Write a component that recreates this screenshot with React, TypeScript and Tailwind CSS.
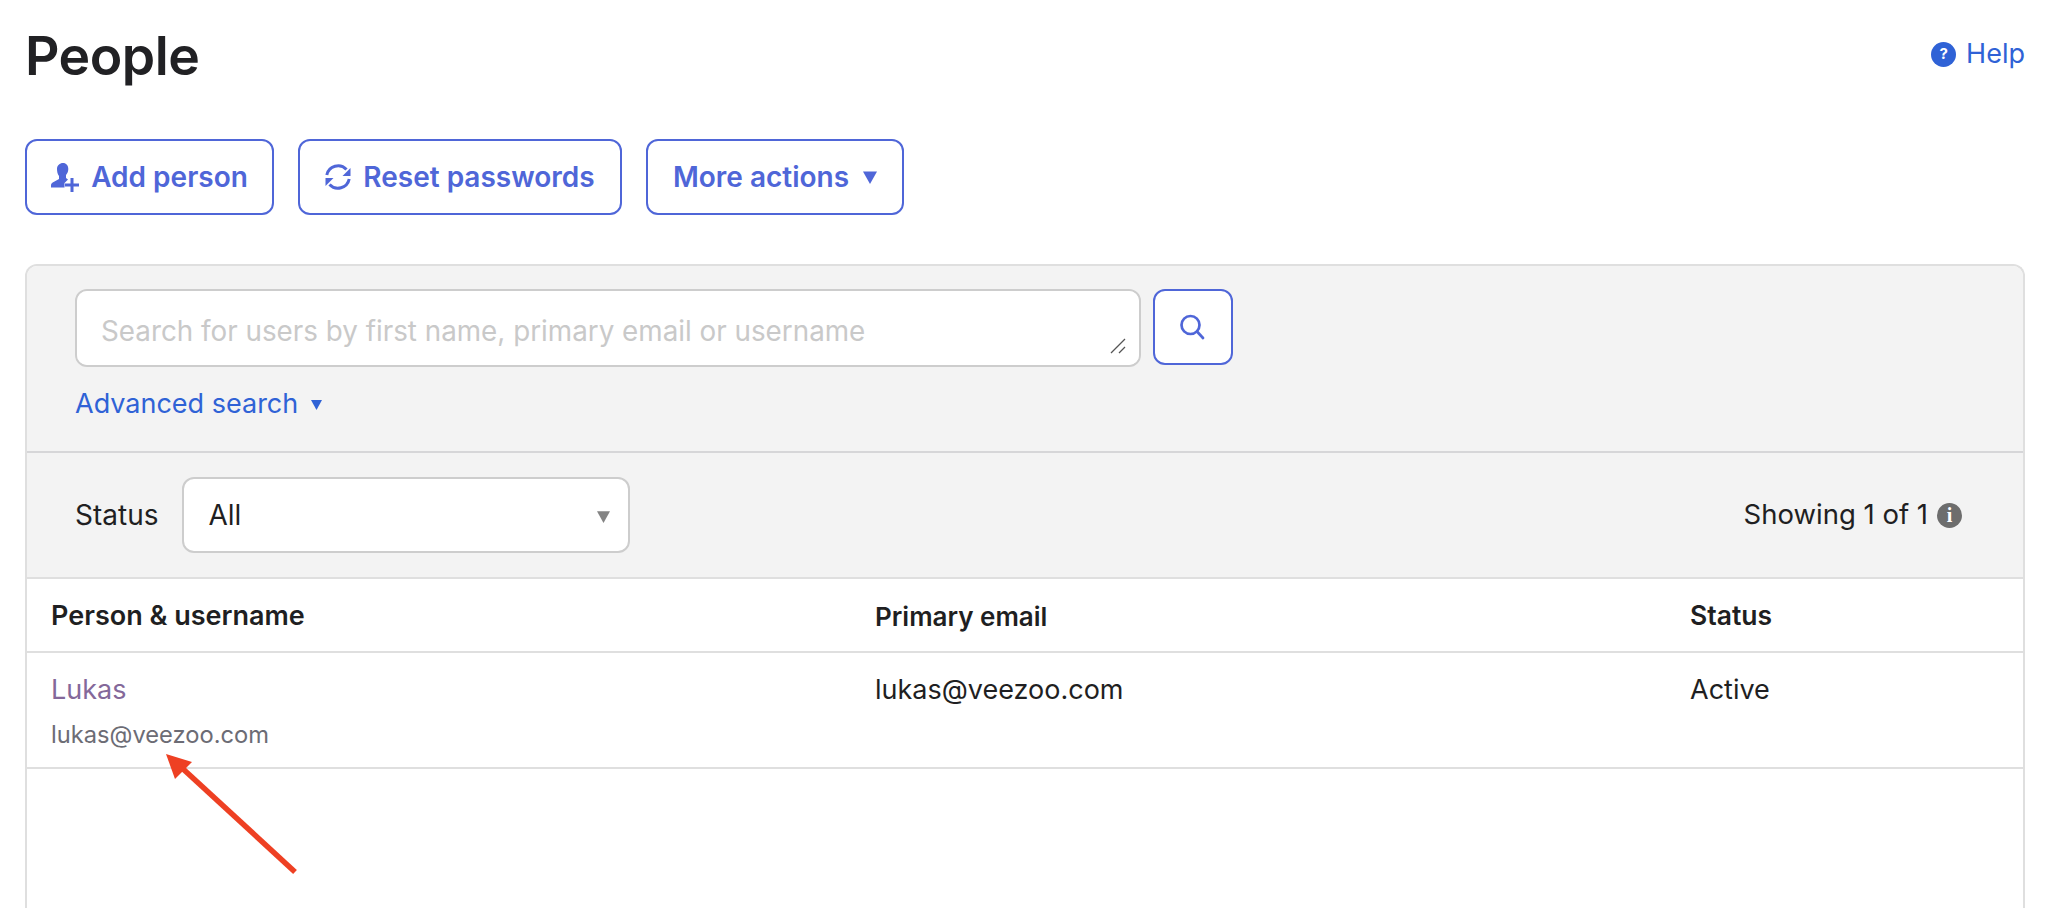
import { useState } from "react";
import type { ReactNode } from "react";

function AddPersonIcon() {
    return (
        <svg width="28" height="29" viewBox="0 0 28 29" fill="currentColor" aria-hidden="true">
            <path d="M12 0c3.200 0 5.300 2.500 5.300 6 0 2.500-1 4.700-2.300 6v3l2 1.500-3.500 3.500v4.500H0v-2.500c0-1.500 1.500-2.500 3.500-3.500l4.500-2.500v-3C6.500 11 6 8.500 6 6c0-3.500 2.800-6 6-6z" />
            <rect x="14" y="20.500" width="14" height="3" />
            <rect x="19.500" y="15" width="3" height="14" />
        </svg>
    );
}

function RefreshIcon() {
    return (
        <svg width="26" height="26" viewBox="0 0 26 26" fill="none" stroke="currentColor" strokeWidth="3" aria-hidden="true">
            <path d="M1.800 11A11.500 11.500 0 0 1 21.500 5.500" />
            <path d="M24.200 15A11.500 11.500 0 0 1 4.500 20.500" />
            <path d="M25.500 4v8h-8z" fill="currentColor" stroke="none" />
            <path d="M.5 22v-8h8z" fill="currentColor" stroke="none" />
        </svg>
    );
}

function SearchIcon() {
    return (
        <svg width="26" height="26" viewBox="0 0 26 26" fill="none" stroke="currentColor" strokeWidth="2.700" aria-hidden="true">
            <circle cx="10.500" cy="11" r="9" />
            <path d="M17 17.500l6 6.500" strokeLinecap="round" />
        </svg>
    );
}

function Caret({ className }: { className: string }) {
    return (
        <svg className={className} viewBox="0 0 10 10" fill="currentColor" aria-hidden="true">
            <path d="M0 1h10L5 10z" />
        </svg>
    );
}

function ActionButton({ className, children }: { className: string; children: ReactNode }) {
    return (
        <button className={`flex h-[76px] items-center justify-center rounded-xl border-2 border-[#4f66d8] bg-white text-[28px] font-semibold text-[#4f66d8] ${className}`}>
            {children}
        </button>
    );
}

export default function App() {
    const [query, setQuery] = useState("");

    return (
        <div className="relative h-[908px] overflow-hidden bg-white px-[25px] font-['Inter',sans-serif] text-[#1f1f22]">
            <header className="flex h-[139px] items-start justify-between">
                <h1 className="mt-[24px] text-[53.500px] leading-[64px] font-semibold tracking-[-0.5px] text-[#212124]">People</h1>
                <a href="#" className="mt-[36px] flex items-center gap-[10px] text-[27px] leading-[36px] text-[#2f62d6]">
                    <span className="flex size-[25px] items-center justify-center rounded-full bg-[#2f62d6] text-[15px] font-bold text-white">?</span>
                    Help
                </a>
            </header>

            <div className="flex gap-[24px]">
                <ActionButton className="w-[249px] gap-[12px]">
                    <AddPersonIcon />
                    Add person
                </ActionButton>
                <ActionButton className="w-[324px] gap-[12px]">
                    <RefreshIcon />
                    Reset passwords
                </ActionButton>
                <ActionButton className="w-[258px] gap-[14px]">
                    More actions
                    <Caret className="size-[14px]" />
                </ActionButton>
            </div>

            <section className="mt-[49px] min-h-[700px] rounded-t-xl border-2 border-b-0 border-[#dfdfdf]">
                <div className="h-[187px] rounded-t-[10px] border-b-2 border-[#d6d6d8] bg-[#f3f3f3] pt-[23px] pl-[48px]">
                    <div className="flex gap-[12px]">
                        <div className="relative">
                            <textarea
                                value={query}
                                onChange={(e) => setQuery(e.target.value)}
                                placeholder="Search for users by first name, primary email or username"
                                className="block h-[78px] w-[1066px] resize-none rounded-xl border-2 border-[#cdcdcd] bg-white px-[24px] pt-[22px] pb-[18px] text-[27.800px] leading-[36px] outline-none placeholder:text-[#c9c9c9]"
                            />
                            <svg className="absolute right-[15px] bottom-[13px]" width="16" height="16" viewBox="0 0 16 16" stroke="#555" strokeWidth="1.300" aria-hidden="true">
                                <path d="M1 15L15 1M9 15l6-6" />
                            </svg>
                        </div>
                        <button className="flex h-[76px] w-[80px] items-center justify-center rounded-xl border-2 border-[#4f66d8] bg-white text-[#4f66d8]">
                            <SearchIcon />
                        </button>
                    </div>
                    <a href="#" className="mt-[19px] flex items-center gap-[13px] text-[27px] leading-[36px] text-[#2f62d6]">
                        Advanced search
                        <Caret className="size-[11px]" />
                    </a>
                </div>

                <div className="flex h-[126px] items-center justify-between border-b-2 border-[#dfdfdf] bg-[#f3f3f3] pr-[61px] pl-[48px]">
                    <div className="flex items-center gap-[24px]">
                        <span className="text-[28px]">Status</span>
                        <div className="relative">
                            <div className="flex h-[76px] w-[448px] items-center rounded-xl border-2 border-[#cdcdcd] bg-white pl-[24px] text-[28px]">All</div>
                            <Caret className="absolute top-[33px] right-[20px] size-[13px] text-[#848484]" />
                        </div>
                    </div>
                    <div className="flex items-center gap-[9px] text-[27.500px]">
                        Showing 1 of 1
                        <span className="flex size-[25px] items-center justify-center rounded-full bg-[#6d6d6d] font-['Liberation_Serif',serif] text-[20px] font-bold text-white">i</span>
                    </div>
                </div>

                <div className="grid h-[74px] grid-cols-[824px_815px_1fr] items-center border-b-2 border-[#dfdfdf] pt-[2px] pl-[24px] font-semibold">
                    <div className="text-[27px]">Person &amp; username</div>
                    <div className="text-[26px]">Primary email</div>
                    <div className="text-[26.500px]">Status</div>
                </div>

                <div className="grid h-[116px] grid-cols-[824px_815px_1fr] border-b-2 border-[#dfdfdf] pt-[19px] pl-[24px] text-[27px] leading-[36px]">
                    <div>
                        <a href="#" className="block text-[#84689a]">Lukas</a>
                        <div className="mt-[10px] text-[23.700px] leading-[33px] text-[#6c6c75]">lukas@veezoo.com</div>
                    </div>
                    <div>lukas@veezoo.com</div>
                    <div>Active</div>
                </div>
            </section>

            {/* annotation drawn on top of the screenshot */}
            <svg className="absolute top-[750px] left-[160px]" width="140" height="128" viewBox="0 0 140 128" aria-hidden="true">
                <path d="M135 122L22 18" stroke="#ee4023" strokeWidth="5.500" />
                <path d="M6 4l26 8-17 17z" fill="#ee4023" />
            </svg>
        </div>
    );
}
